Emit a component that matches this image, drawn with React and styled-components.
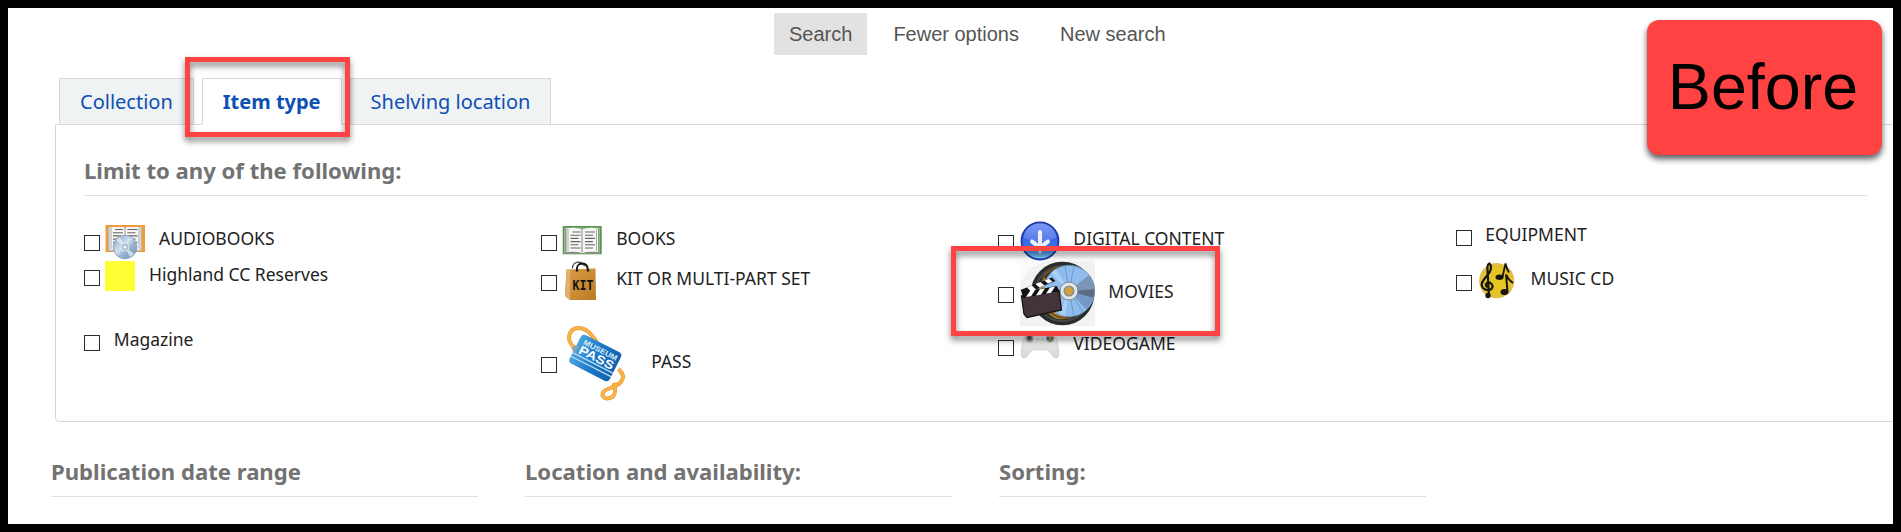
import React from "react";
import styled, { createGlobalStyle, css } from "styled-components";

const Global = createGlobalStyle`
  * { box-sizing: border-box; }
  body { margin: 0; background: #fff; }
`;

const sans = `"Noto Sans", "Open Sans", sans-serif`;
const arial = `"Liberation Sans", Arial, sans-serif`;

const Frame = styled.main`
  position: relative;
  width: 1901px;
  height: 532px;
  border: 8px solid #000;
  background: #fff;
  overflow: hidden;
  display: flex;
  flex-direction: column;
  font-family: ${sans};
`;

const Toolbar = styled.nav`
  display: flex;
  gap: 11px;
  padding: 5px 0 0 766px;
`;

const ToolButton = styled.button`
  height: 42px;
  padding: 0 15px;
  border: 0;
  background: ${(p) => (p.$primary ? "#e2e2e2" : "transparent")};
  color: #555;
  font: 20px/42px ${arial};
  white-space: nowrap;
`;

const Tabs = styled.div`
  display: flex;
  gap: 8px;
  margin: 23px 0 -1px 51px;
  height: 47px;
`;

const Tab = styled.div`
  height: 47px;
  padding: 0 20px;
  border: 1px solid #d8d8d8;
  background: #eff3f3;
  color: #0d4fb4;
  font-size: 20px;
  line-height: 46px;
  white-space: nowrap;
  ${(p) =>
    p.$active &&
    css`
      position: relative;
      z-index: 1;
      background: #fff;
      border-bottom-color: #fff;
      font-weight: 700;
    `}
`;

const Panel = styled.section`
  margin-left: 47px;
  height: 298px;
  padding: 0 26px 0 28px;
  border: 1px solid #d8d8d8;
  border-right: 0;
  border-bottom-left-radius: 5px;
`;

const Heading = styled.h2`
  margin: 0;
  border-bottom: 1px solid #e2e2e2;
  color: #727272;
  font-size: 22.1px;
  font-weight: 700;
  line-height: 30px;
  white-space: nowrap;
`;

const LimitHeading = styled(Heading)`
  padding: 30px 0 10px;
`;

const Choices = styled.div`
  display: grid;
  grid-template-columns: repeat(3, 457.2px) 411px;
  grid-template-rows: 40px 65px 75px;
  margin-top: 25px;
  width: 1783px;
`;

const Choice = styled.label`
  display: flex;
  align-items: flex-start;
  color: #222;
  font-size: 17.5px;
  line-height: 24px;
  white-space: nowrap;
`;

const Checkbox = styled.input.attrs({ type: "checkbox" })`
  appearance: none;
  flex: none;
  width: 16px;
  height: 16px;
  margin: ${(p) => p.$top}px 0 0;
  border: 1px solid #2b2a33;
  background: #fff;
`;

const Icon = styled.svg`
  display: block;
  flex: none;
  margin-left: 5.2px;
`;

const Swatch = styled.span`
  flex: none;
  width: 30px;
  height: 30px;
  margin-left: 5.2px;
  background: #ff3;
`;

const ChoiceName = styled.span`
  margin: ${(p) => p.$top}px 0 0 13.8px;
`;

const Lower = styled.div`
  display: grid;
  grid-template-columns: repeat(3, 427px);
  gap: 47px;
  margin: 34px 0 0 43px;
`;

const LowerHeading = styled(Heading)`
  padding: 0 0 10px;
`;

const Highlight = styled.div`
  position: absolute;
  z-index: 2;
  border: 5px solid #ff4343;
  filter: drop-shadow(0 4px 3px rgba(0, 0, 0, 0.5));
`;

const TabHighlight = styled(Highlight)`
  left: 177px;
  top: 49px;
  width: 165px;
  height: 80px;
`;

const MoviesHighlight = styled(Highlight)`
  left: 943px;
  top: 238px;
  width: 269px;
  height: 90px;
`;

const Stamp = styled.div`
  position: absolute;
  z-index: 2;
  left: 1639px;
  top: 12px;
  width: 235px;
  height: 135px;
  border-radius: 12px;
  background: #ff4343;
  box-shadow: 0 4px 6px rgba(0, 0, 0, 0.65);
  color: #000;
  font: 64.6px/134px ${arial};
  text-align: center;
  text-indent: -3px;
`;

const PageLines = ({ left, right, top }) => (
  <g stroke="#666" strokeWidth="1.1">
    {[0, 3.2, 6.4, 9.6, 12.8, 16].map((d, i) => (
      <path
        key={d}
        d={`M${left + (i ? 0 : 2)} ${top + d}h${i % 2 ? 10 : 8}M${right} ${top + d}h${i % 2 ? 8 : 10}`}
      />
    ))}
  </g>
);

const AudiobookIcon = () => (
  <Icon width="40" height="40" viewBox="0 0 40 40">
    <defs>
      <linearGradient id="cd" x1="0" y1="0" x2="1" y2="1">
        <stop offset="0" stopColor="#7f9fc0" />
        <stop offset=".45" stopColor="#d3e2f0" />
        <stop offset=".6" stopColor="#9ab5d1" />
        <stop offset="1" stopColor="#6f92b8" />
      </linearGradient>
    </defs>
    <rect x=".5" y="4" width="39.5" height="27" fill="#ee9c3c" />
    <path d="M3 6h34v24H3z" fill="#b9b7b4" />
    <path d="M4.500 6H19l1 1.500 1-1.500h14.500v23H4.500z" fill="#f6f5f3" />
    <path d="M6 6v22M34 6v22" stroke="#aaa" />
    <PageLines left={8} right={22.5} top={8.5} />
    <path d="M20 6v20" stroke="#999" />
    <circle cx="20" cy="26" r="11.8" fill="url(#cd)" stroke="#7d98b5" strokeWidth=".8" />
    <path d="M20 26 11 19l4-3zM20 26l9 7-4 3z" fill="#e8f1f8" opacity=".7" />
    <circle cx="20" cy="26" r="4" fill="#a9bfd6" stroke="#dce7f1" />
    <circle cx="20" cy="26" r="1.6" fill="#f5f8fb" />
  </Icon>
);

const BookIcon = () => (
  <Icon width="40" height="40" viewBox="0 0 40 40">
    <rect x=".7" y="5" width="39" height="28.3" fill="#5c9150" />
    <path d="M2 6.500h36v26H2z" fill="#8fb884" />
    <path d="M3.500 8h33v24h-33z" fill="#888" />
    <path d="M4.500 7.500Q13 5.500 20 8.500 27 5.500 36 7.500V31q-9-1-16 1-7-2-15.500-1z" fill="#f7f7f5" />
    <path d="M6 8v22M34.500 8v22" stroke="#aaa" />
    <PageLines left={8.5} right={23} top={11} />
    <path d="M20 8v23" stroke="#aaa" strokeWidth="1.5" />
  </Icon>
);

const DownloadIcon = () => (
  <Icon width="40" height="40" viewBox="0 0 40 40">
    <defs>
      <linearGradient id="orb" x1="0" y1="0" x2="0" y2="1">
        <stop offset="0" stopColor="#5f83f2" />
        <stop offset=".45" stopColor="#3a63e8" />
        <stop offset=".65" stopColor="#3878ea" />
        <stop offset="1" stopColor="#7fd8f5" />
      </linearGradient>
    </defs>
    <circle cx="20" cy="20" r="18.5" fill="url(#orb)" stroke="#1f3aa6" strokeWidth="1.8" />
    <path d="M4 17a16 15 0 0 1 32 0q-16 7-32 0z" fill="#fff" opacity=".18" />
    <path d="M20 11v18M12 20.500q5 3 8 8.500 3-5.500 8-8.500" fill="none" stroke="#edf3ff" strokeWidth="4" strokeLinecap="round" />
  </Icon>
);

const KitIcon = () => (
  <Icon width="40" height="40" viewBox="0 0 40 40">
    <defs>
      <linearGradient id="bag" x1="0" y1="0" x2="1" y2="1">
        <stop offset="0" stopColor="#d69a48" />
        <stop offset=".6" stopColor="#c98a32" />
        <stop offset="1" stopColor="#b97821" />
      </linearGradient>
    </defs>
    <path d="M10.500 7.500q0-6 6-6.300 4 0 6 4" fill="none" stroke="#555" strokeWidth="1.2" />
    <path d="M4.500 8.500 33.500 7.500 34 39 8 39 3 35z" fill="url(#bag)" />
    <path d="M4.500 8.500 8.500 9 8 39 3 35z" fill="#e0b06b" />
    <path d="M15 10q-1-7 5-7.500 6 0 6 7.500" fill="none" stroke="#17130e" strokeWidth="1.8" />
    <path d="M13.800 9.500h2.400M24.800 9.500h2.400" stroke="#17130e" strokeWidth="2" />
    <text x="10.5" y="28.5" textLength="21" lengthAdjust="spacingAndGlyphs" fontFamily="DejaVu Sans Mono, monospace" fontWeight="700" fontSize="14" fill="#15120d">KIT</text>
  </Icon>
);

const MoviesIcon = () => (
  <Icon width="75" height="65" viewBox="0 0 75 65">
    <rect width="75" height="65" fill="#f0f3f2" />
    <path d="M0 25Q6 4 29 0H0z" fill="#fafbfa" />
    <circle cx="42.5" cy="32.5" r="31.8" fill="#292c2b" />
    <circle cx="42.5" cy="32.5" r="27.5" fill="none" stroke="#444846" strokeWidth="2" />
    <path d="M25 16q-7 8-7 17 4 18 17 24 8 3 17-1L30 42z" fill="#b98a35" />
    <path d="M22 18q6-9 16-12M30 51q9 8 20 5" fill="none" stroke="#6e4f1d" strokeWidth="2" />
    <circle cx="49" cy="30" r="25.7" fill="#8fbdf0" stroke="#678bb2" strokeWidth=".8" />
    <path d="M49 30 69 14q6 8 5.500 14z" fill="#7d95b5" />
    <path d="M49 30 74.500 28q0 6-1.500 9z" fill="#5c6c82" />
    <path d="M49 30 73 37q-3 8-7 11z" fill="#7499c4" />
    <path d="M49 30 31 12l5-4zM49 30 39 53l6 2z" fill="#a9d0f5" />
    <path d="M49 30 45 5M49 30l5-25M49 30l5 25M49 30l14 21" stroke="#7099c9" strokeWidth="1" />
    <circle cx="49" cy="30" r="9" fill="#e3e6e7" stroke="#788791" />
    <circle cx="49" cy="30" r="5.5" fill="#8d8f8c" />
    <circle cx="49" cy="30" r="3.7" fill="#d6a13b" />
    <path d="M1.500 35 39 29.500 41.500 49 7 56.500 4 53z" fill="#43333a" stroke="#181416" strokeWidth="1.3" />
    <path d="M.5 29 32 16.500 35.500 20 3 33zM1.500 31.500 37 25l2 5L3.500 37z" fill="#121212" />
    <path d="M7 26.500l5-2 4 4-5 2zM15.500 23l5-2 4 3.500-5 2zM24.500 19.500l4.500-1.700 3.500 3-4.500 1.700zM6 36l4-6 5-.7-4 6zM16 34.500l4-6.300 5-.8-4 6.200zM26 32.500l4-6 5-.8-4 6z" fill="#fff" />
  </Icon>
);

const MusicIcon = () => (
  <Icon width="40" height="40" viewBox="0 0 40 40">
    <defs>
      <radialGradient id="coin">
        <stop offset="0" stopColor="#e5ca20" />
        <stop offset=".8" stopColor="#e6c128" />
        <stop offset="1" stopColor="#dfbd55" />
      </radialGradient>
    </defs>
    <circle cx="19.7" cy="19.7" r="17.6" fill="url(#coin)" />
    <path d="M12 34.500 10.500 9Q10 3 12.500 2.500q3 3 0 9L7 18.500q-4 5-1 8.500 3.500 3.500 8 1.300 3.500-3-.5-6.300-3-1.500-4.500 1-.5 2 1.500 3" fill="none" stroke="#17160d" strokeWidth="2.2" />
    <circle cx="11" cy="34.5" r="2.7" fill="#17160d" />
    <ellipse cx="22.5" cy="16.2" rx="4" ry="2.7" fill="#17160d" />
    <path d="M25.500 16 28.500 2.500q1 5 3.500 9" fill="none" stroke="#17160d" strokeWidth="1.8" />
    <ellipse cx="27.5" cy="31" rx="4" ry="3" fill="#17160d" transform="rotate(-12 27.5 31)" />
    <path d="M30.500 30.500 29 13.500q2 5 7 8.500" fill="none" stroke="#17160d" strokeWidth="2" />
  </Icon>
);

const strapTop = "M13 22Q6.500 17 7 10.500 8.500 2.500 16 2 24 2 29 8.500L35 16";
const strapBottom = "M56.500 43Q64 50 59 56 55 60 47 62.500 40 65 40.500 69.500 43.500 75 51 70.500 55 66 51.500 57";

const PassIcon = () => (
  <Icon width="75" height="75" viewBox="0 0 75 75">
    <defs>
      <linearGradient id="pass" x1="0" y1="0" x2="1" y2="0">
        <stop offset="0" stopColor="#4ba3df" />
        <stop offset=".5" stopColor="#1c78c5" />
        <stop offset="1" stopColor="#1262b0" />
      </linearGradient>
    </defs>
    <path d={strapTop} fill="none" stroke="#e0952f" strokeWidth="3.9" />
    <path d={strapTop} fill="none" stroke="#fbb345" strokeWidth="2.8" />
    <g transform="translate(20.5 7.5) rotate(27)">
      <rect width="45" height="32" rx="4" fill="url(#pass)" />
      <path d="M0 21.500h45M0 25.500h45" stroke="#b7dcf4" strokeWidth="1.3" />
      <text x="5" y="9.3" textLength="37" lengthAdjust="spacingAndGlyphs" fontFamily="Liberation Sans, sans-serif" fontWeight="700" fontSize="7.5" fill="#d9effc">MUSEUM</text>
      <text x="4.5" y="19.3" textLength="38" lengthAdjust="spacingAndGlyphs" fontFamily="Liberation Sans, sans-serif" fontWeight="700" fontSize="12" fill="#fff">PASS</text>
    </g>
    <path d="M10 23l5-3M11 26l5-6" stroke="#8ea1b3" strokeWidth="2.5" />
    <path d={strapBottom} fill="none" stroke="#e0952f" strokeWidth="3.9" />
    <path d={strapBottom} fill="none" stroke="#fbb345" strokeWidth="2.8" />
  </Icon>
);

const GamepadIcon = () => (
  <Icon width="40" height="40" viewBox="0 0 40 40">
    <defs>
      <linearGradient id="pad" x1="0" y1="0" x2="0" y2="1">
        <stop offset="0" stopColor="#f4f4f4" />
        <stop offset="1" stopColor="#d5d5d5" />
      </linearGradient>
    </defs>
    <path d="M8 7.500q12-2 24 0 4 2 5.500 10 2 9 1 13-2 3-5.500 0l-5-6.500H12L7 30.500q-3.500 3-5.500 0-1-4 1-13 1.500-8 5.500-10z" fill="url(#pad)" stroke="#cfcfcf" strokeWidth=".7" />
    <circle cx="9.5" cy="12.5" r="4" fill="#aaa" />
    <circle cx="9.5" cy="12" r="2.3" fill="#555" />
    <path d="M16.500 13.500h2.500M21.500 13.500h2.500" stroke="#8ab9dc" strokeWidth="1.2" />
    <circle cx="30" cy="12.5" r="4" fill="#aaa" />
    <circle cx="28" cy="12.5" r="1.4" fill="#3862b4" />
    <circle cx="32" cy="12.5" r="1.4" fill="#c34a40" />
    <circle cx="30" cy="14.5" r="1.4" fill="#5b9d4b" />
    <circle cx="30" cy="10.5" r="1.4" fill="#c7a63c" />
  </Icon>
);

/* box and text are the drops of the checkbox and of the name within a row */
const choices = [
  { name: "AUDIOBOOKS", art: <AudiobookIcon />, box: 14, text: 5 },
  { name: "BOOKS", art: <BookIcon />, box: 14, text: 5 },
  { name: "DIGITAL CONTENT", art: <DownloadIcon />, box: 14, text: 5 },
  { name: "EQUIPMENT", box: 9, text: 1 },
  { name: "Highland CC Reserves", art: <Swatch />, box: 9, text: 1 },
  { name: "KIT OR MULTI-PART SET", art: <KitIcon />, box: 14, text: 5 },
  { name: "MOVIES", art: <MoviesIcon />, box: 26, text: 18 },
  { name: "MUSIC CD", art: <MusicIcon />, box: 14, text: 5 },
  { name: "Magazine", box: 9, text: 1 },
  { name: "PASS", art: <PassIcon />, box: 31, text: 23 },
  { name: "VIDEOGAME", art: <GamepadIcon />, box: 14, text: 5 },
];

export default function App() {
  return (
    <>
      <Global />
      <Frame>
        <Toolbar>
          <ToolButton $primary>Search</ToolButton>
          <ToolButton>Fewer options</ToolButton>
          <ToolButton>New search</ToolButton>
        </Toolbar>
        <Tabs>
          <Tab>Collection</Tab>
          <Tab $active>Item type</Tab>
          <Tab>Shelving location</Tab>
        </Tabs>
        <Panel>
          <LimitHeading>Limit to any of the following:</LimitHeading>
          <Choices>
            {choices.map((c) => (
              <Choice key={c.name}>
                <Checkbox $top={c.box} />
                {c.art}
                <ChoiceName $top={c.text}>{c.name}</ChoiceName>
              </Choice>
            ))}
          </Choices>
        </Panel>
        <Lower>
          <LowerHeading>Publication date range</LowerHeading>
          <LowerHeading>Location and availability:</LowerHeading>
          <LowerHeading>Sorting:</LowerHeading>
        </Lower>
        <TabHighlight />
        <MoviesHighlight />
        <Stamp>Before</Stamp>
      </Frame>
    </>
  );
}
